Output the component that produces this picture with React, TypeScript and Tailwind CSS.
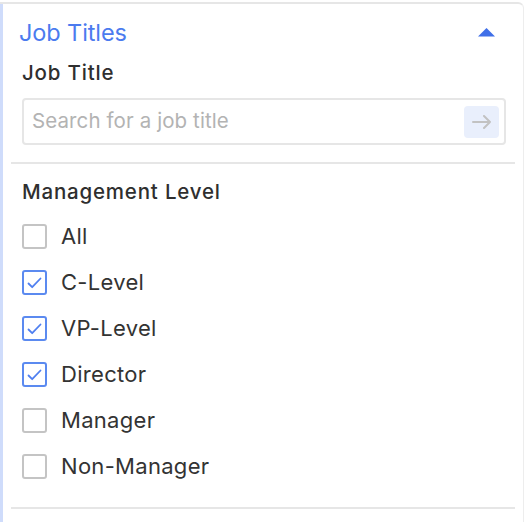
import React from "react";

const items = [
  { label: "All", checked: false },
  { label: "C-Level", checked: true },
  { label: "VP-Level", checked: true },
  { label: "Director", checked: true },
  { label: "Manager", checked: false },
  { label: "Non-Manager", checked: false },
];

function Box({ checked }: { checked: boolean }) {
  return (
    <div
      className={
        checked
          ? "w-[25px] h-[25px] rounded-[3px] border-2 border-[#5b8af0] flex items-center justify-center bg-white"
          : "w-[25px] h-[25px] rounded-[3px] border-2 border-[#c4c4c4] bg-white"
      }
    >
      {checked && (
        <svg width="15" height="12" viewBox="0 0 15 12" fill="none">
          <path d="M1.5 6.5 L5.2 10.2 L13.5 1.5" stroke="#4f7ff0" strokeWidth="1.8" strokeLinecap="round" strokeLinejoin="round" />
        </svg>
      )}
    </div>
  );
}

export default function App() {
  return (
    <div className="w-[528px] h-[522px] bg-white overflow-hidden" style={{ fontFamily: "Inter, 'Noto Sans', sans-serif" }}>
      <div className="mt-[2px] w-[524px] h-[520px] border-t-2 border-[#e6e6e6] border-r border-r-[#ededed] rounded-tr-[6px] flex">
        <div className="w-[3px] bg-[#cfdcfb]" />
        <div className="flex-1 flex flex-col">
          <div className="flex items-center justify-between pl-[16px] pr-[28px] pt-[15px] h-[42px]">
            <span className="text-[23.5px] text-[#4b7bef] tracking-[-0.1px] leading-[28px]">Job Titles</span>
            <svg width="17" height="9" viewBox="0 0 17 9">
              <path d="M0 8.5 L8.5 0 L17 8.5 Z" fill="#3f6fe8" />
            </svg>
          </div>
          <div className="pl-[19px] pr-[17px] mt-[16px]">
            <div className="text-[20.5px] font-medium text-[#2f2f2f] leading-[22px] tracking-[0.8px]">Job Title</div>
            <div className="mt-[14px] h-[47px] border-2 border-[#e6e6e6] rounded-[4px] flex items-center pl-[8px] pr-[5px]">
              <span className="flex-1 text-[20.5px] text-[#b3b3b3] tracking-[0.1px]">Search for a job title</span>
              <div className="w-[35px] h-[32px] bg-[#e9effc] rounded-[4px] flex items-center justify-center">
                <svg width="20" height="14" viewBox="0 0 20 14" fill="none">
                  <path d="M1 7 H18 M12 1 L18 7 L12 13" stroke="#c2c2c2" strokeWidth="2" strokeLinecap="round" strokeLinejoin="round" />
                </svg>
              </div>
            </div>
          </div>
          <div className="mx-[8px] mt-[17px] h-[2px] bg-[#e6e6e6]" />
          <div className="pl-[19px] mt-[17px]">
            <div className="text-[20.5px] font-medium text-[#2f2f2f] leading-[22px] tracking-[0.8px]">Management Level</div>
            <div className="mt-[21px] flex flex-col gap-[21px]">
              {items.map((it) => (
                <div key={it.label} className="flex items-center gap-[14px] h-[25px]">
                  <Box checked={it.checked} />
                  <span className="text-[22px] text-[#333] tracking-[0.3px]">{it.label}</span>
                </div>
              ))}
            </div>
          </div>
          <div className="mx-[8px] mt-[28px] h-[2px] bg-[#e6e6e6]" />
        </div>
      </div>
    </div>
  );
}
